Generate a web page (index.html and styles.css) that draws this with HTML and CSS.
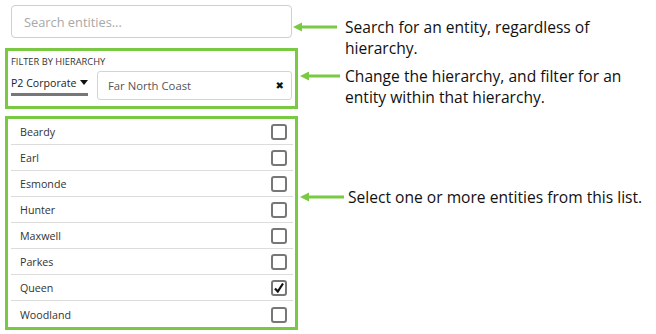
FILE: index.html
```html
<!DOCTYPE html>
<html>
<head>
<meta charset="utf-8">
<link rel="stylesheet" href="styles.css">
</head>
<body>
<div class="page">
  <section class="row row-search">
    <div class="left">
      <div class="search">Search entities...</div>
    </div>
    <div class="note note-1">
      <svg class="arrow" width="44" height="10" viewBox="0 0 44 10"><polygon points="0,5 9,0.5 9,9.5" fill="#7ac943"/><rect x="8" y="3.5" width="36" height="3" fill="#7ac943"/></svg>
      <p class="text">Search for an entity, regardless of hierarchy.</p>
    </div>
  </section>

  <section class="row row-filter">
    <div class="left">
      <div class="box filter">
        <div class="label">FILTER BY HIERARCHY</div>
        <div class="controls">
          <div class="dropdown"><span>P2 Corporate</span><span class="caret"></span></div>
          <div class="input"><span>Far North Coast</span><span class="clear">&#x2716;</span></div>
        </div>
      </div>
    </div>
    <div class="note note-2">
      <svg class="arrow" width="40" height="10" viewBox="0 0 40 10"><polygon points="0,5 9,0.5 9,9.5" fill="#7ac943"/><rect x="8" y="3.5" width="32" height="3" fill="#7ac943"/></svg>
      <p class="text">Change the hierarchy, and filter for an entity within that hierarchy.</p>
    </div>
  </section>

  <section class="row row-list">
    <div class="left">
      <ul class="box list">
        <li><span>Beardy</span><span class="check"></span></li>
        <li><span>Earl</span><span class="check"></span></li>
        <li><span>Esmonde</span><span class="check"></span></li>
        <li><span>Hunter</span><span class="check"></span></li>
        <li><span>Maxwell</span><span class="check"></span></li>
        <li><span>Parkes</span><span class="check"></span></li>
        <li><span>Queen</span><span class="check checked"><svg width="12" height="12" viewBox="0 0 12 12"><path d="M2 6.5 L4.8 9.5 L10 1.5" fill="none" stroke="#111" stroke-width="2.2"/></svg></span></li>
        <li><span>Woodland</span><span class="check"></span></li>
      </ul>
    </div>
    <div class="note note-3">
      <svg class="arrow" width="44" height="10" viewBox="0 0 44 10"><polygon points="0,5 9,0.5 9,9.5" fill="#7ac943"/><rect x="8" y="3.5" width="36" height="3" fill="#7ac943"/></svg>
      <p class="text">Select one or more entities from this list.</p>
    </div>
  </section>
</div>
</body>
</html>
```

FILE: styles.css
```css
html, body {
  margin: 0;
  padding: 0;
  background: #fff;
}
body {
  font-family: "Open Sans", "Noto Sans", sans-serif;
  color: #333;
  width: 656px;
  height: 334px;
  overflow: hidden;
}
.page {
  display: flex;
  flex-direction: column;
}
.row {
  display: flex;
  align-items: flex-start;
}
.left {
  width: 293px;
  flex: none;
}
.row-search {
  padding-top: 5px;
  height: 43px;
}
.row-search .left {
  padding-left: 11px;
  width: 282px;
}
.search {
  box-sizing: border-box;
  height: 33px;
  width: 281px;
  border: 1px solid #cfcfcf;
  border-radius: 4px;
  padding-left: 12px;
  display: flex;
  align-items: center;
  font-size: 12.8px;
  color: #a8a8a8;
}
.box {
  margin: 0 0 0 5px;
  border: 3px solid #7ac943;
  box-sizing: border-box;
  width: 293px;
}
.filter {
  height: 61px;
  padding: 5px 3px 0 3px;
}
.label {
  font-size: 9.3px;
  color: #333;
  line-height: 12px;
}
.controls {
  display: flex;
  align-items: flex-start;
  margin-top: 3px;
}
.dropdown {
  box-sizing: border-box;
  width: 77px;
  height: 25px;
  border-bottom: 3px solid #777;
  display: flex;
  align-items: center;
  justify-content: space-between;
  font-size: 10.6px;
  color: #222;
  padding-top: 1px;
  white-space: nowrap;
}
.caret {
  width: 0;
  height: 0;
  border-left: 4px solid transparent;
  border-right: 4px solid transparent;
  border-top: 5px solid #111;
  margin-right: 0;
}
.input {
  box-sizing: border-box;
  margin-left: 9px;
  width: 195px;
  height: 29px;
  border: 1px solid #d4d4d4;
  border-radius: 3px;
  display: flex;
  align-items: center;
  justify-content: space-between;
  padding: 0 7px 0 10px;
  font-size: 11.3px;
  color: #555;
}
.clear {
  font-size: 10px;
  color: #111;
  font-family: "DejaVu Sans", sans-serif;
}
.row-filter {
  height: 68px;
}
.list {
  list-style: none;
  padding: 0 2px 0 3px;
  height: 214px;
}
.list li {
  box-sizing: border-box;
  height: 26px;
  border-bottom: 1px solid #dcdcdc;
  display: flex;
  align-items: center;
  justify-content: space-between;
  padding: 1px 6px 0 9px;
  font-size: 10.7px;
  color: #333;
}
.list li:last-child {
  border-bottom: none;
}
.check {
  box-sizing: border-box;
  width: 16px;
  height: 16px;
  border: 2px solid #777;
  border-radius: 3px;
  display: flex;
  align-items: center;
  justify-content: center;
}
.note {
  display: flex;
  align-items: flex-start;
}
.arrow {
  flex: none;
  display: block;
}
.text {
  margin: 0;
  font-size: 15.6px;
  line-height: 20.5px;
  color: #111;
}
.note-1 {
  padding-top: 17px;
}
.note-1 .text { margin-left: 8px; margin-top: -5px; width: 300px; }
.note-2 {
  padding-top: 23px;
  margin-left: 7px;
}
.note-2 .text { margin-left: 5px; margin-top: -5px; width: 305px; }
.note-3 {
  padding-top: 76px;
  margin-left: 7px;
}
.note-3 .text { margin-left: 4px; margin-top: -5px; width: 310px; }
```
